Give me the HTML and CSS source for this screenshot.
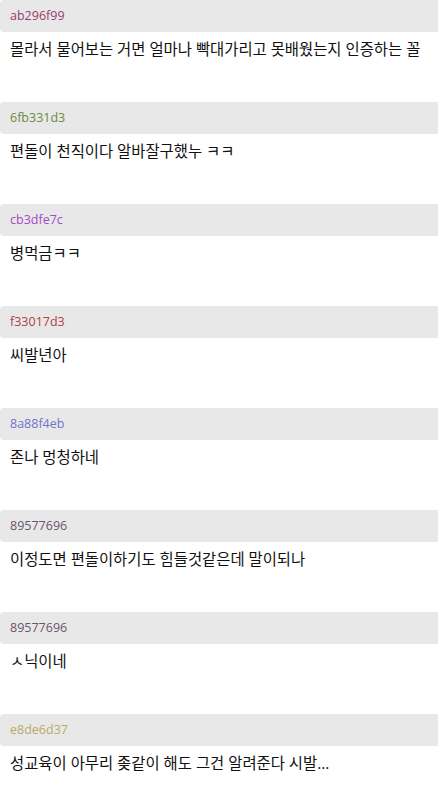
FILE: index.html
```html
<!DOCTYPE html>
<html lang="ko">
<head>
    <meta charset="UTF-8">
    <meta name="viewport" content="width=device-width, initial-scale=1.0">
    <title>댓글</title>
    <link rel="stylesheet" href="styles.css">
</head>
<body>
    <div class="comments">
        <div class="comment">
            <div class="comment-head c1">ab296f99</div>
            <p class="comment-body">몰라서 물어보는 거면 얼마나 빡대가리고 못배웠는지 인증하는 꼴</p>
        </div>
        <div class="comment">
            <div class="comment-head c2">6fb331d3</div>
            <p class="comment-body">편돌이 천직이다 알바잘구했누 ㅋㅋ</p>
        </div>
        <div class="comment">
            <div class="comment-head c3">cb3dfe7c</div>
            <p class="comment-body">병먹금ㅋㅋ</p>
        </div>
        <div class="comment">
            <div class="comment-head c4">f33017d3</div>
            <p class="comment-body">씨발년아</p>
        </div>
        <div class="comment">
            <div class="comment-head c5">8a88f4eb</div>
            <p class="comment-body">존나 멍청하네</p>
        </div>
        <div class="comment">
            <div class="comment-head c6">89577696</div>
            <p class="comment-body">이정도면 편돌이하기도 힘들것같은데 말이되나</p>
        </div>
        <div class="comment">
            <div class="comment-head c6">89577696</div>
            <p class="comment-body">ㅅ닉이네</p>
        </div>
        <div class="comment">
            <div class="comment-head c7">e8de6d37</div>
            <p class="comment-body">성교육이 아무리 좆같이 해도 그건 알려준다 시발...</p>
        </div>
    </div>
</body>
</html>
```

FILE: styles.css
```css
/* Global */
body {
    margin: 0;
    background: #fff;
    color: #111;
    font-family: "Open Sans", "Noto Sans CJK KR", sans-serif;
    overflow: hidden;
}

/* Comment list */
.comments {
    display: flex;
    flex-direction: column;
}
.comment {
    height: 102px;
}
.comment-head {
    height: 32px;
    line-height: 32px;
    padding-left: 10px;
    background: #e8e8e8;
    border-radius: 4px 0 0 4px;
    font-size: 12.5px;
}
.comment-body {
    margin: 0;
    padding: 8px 10px 0;
    line-height: 20px;
    font-size: 15.4px;
    white-space: nowrap;
    overflow: hidden;
}

/* Hash colours */
.c1 { color: #9b3a6e; }
.c2 { color: #6b8a45; }
.c3 { color: #a04cc6; }
.c4 { color: #b24040; }
.c5 { color: #7472d0; }
.c6 { color: #6a5570; }
.c7 { color: #b8aa6a; }
```
